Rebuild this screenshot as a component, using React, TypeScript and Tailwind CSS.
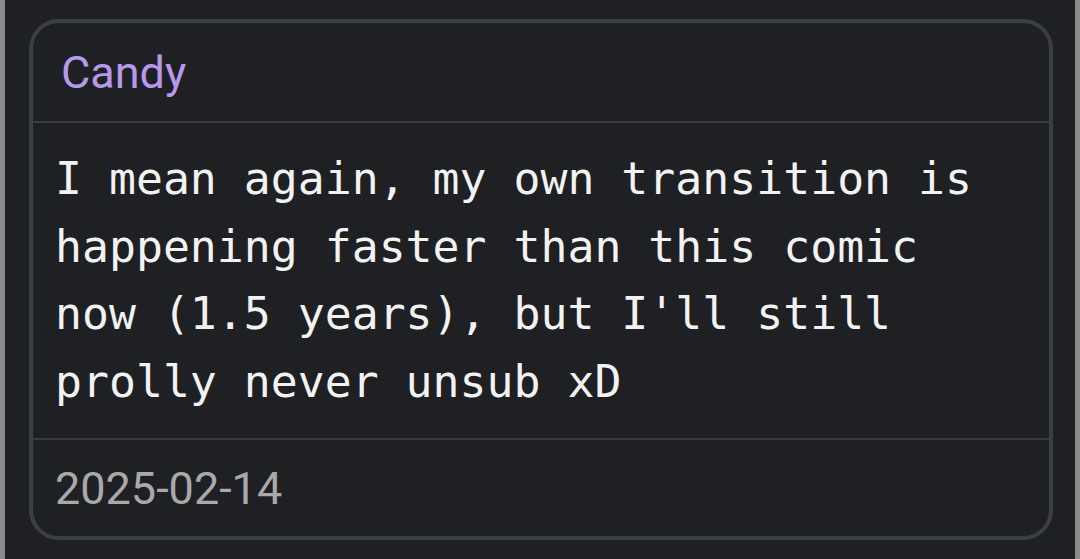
export default function App() {
  return (
    <div className="flex h-[559px] w-[1080px] overflow-hidden bg-[#1f2023]">
      {/* edge strips */}
      <div className="w-[5px] shrink-0 bg-[#8a8a8a]" />

      <main className="flex flex-1 pb-[19px] pl-[24px] pr-[22px] pt-[19px]">
        <section className="flex flex-1 flex-col rounded-[30px] border-4 border-[#3c3e45] bg-[#1f2023]">
          <header className="flex h-[98px] items-center px-[28px] pt-[2px] font-['Roboto',sans-serif] text-[45px] text-[#b799ea]">
            Candy
          </header>
          <div className="h-[2px] bg-[#3a3b40]" />
          <p className="h-[315px] pl-[22px] pr-[40px] pt-[22px] font-['DejaVu_Sans_Mono','Liberation_Mono',monospace] text-[44.8px] leading-[67.5px] text-[#f2f2f2]">
            I mean again, my own transition is happening faster than this comic
            now (1.5 years), but I'll still prolly never unsub xD
          </p>
          <div className="h-[2px] bg-[#3a3b40]" />
          <footer className="flex flex-1 items-center px-[22px] pt-[2px] font-['Roboto',sans-serif] text-[45px] text-[#a9a9a9]">
            2025-02-14
          </footer>
        </section>
      </main>

      <div className="w-[5px] shrink-0 bg-[#8a8a8a]" />
    </div>
  );
}
